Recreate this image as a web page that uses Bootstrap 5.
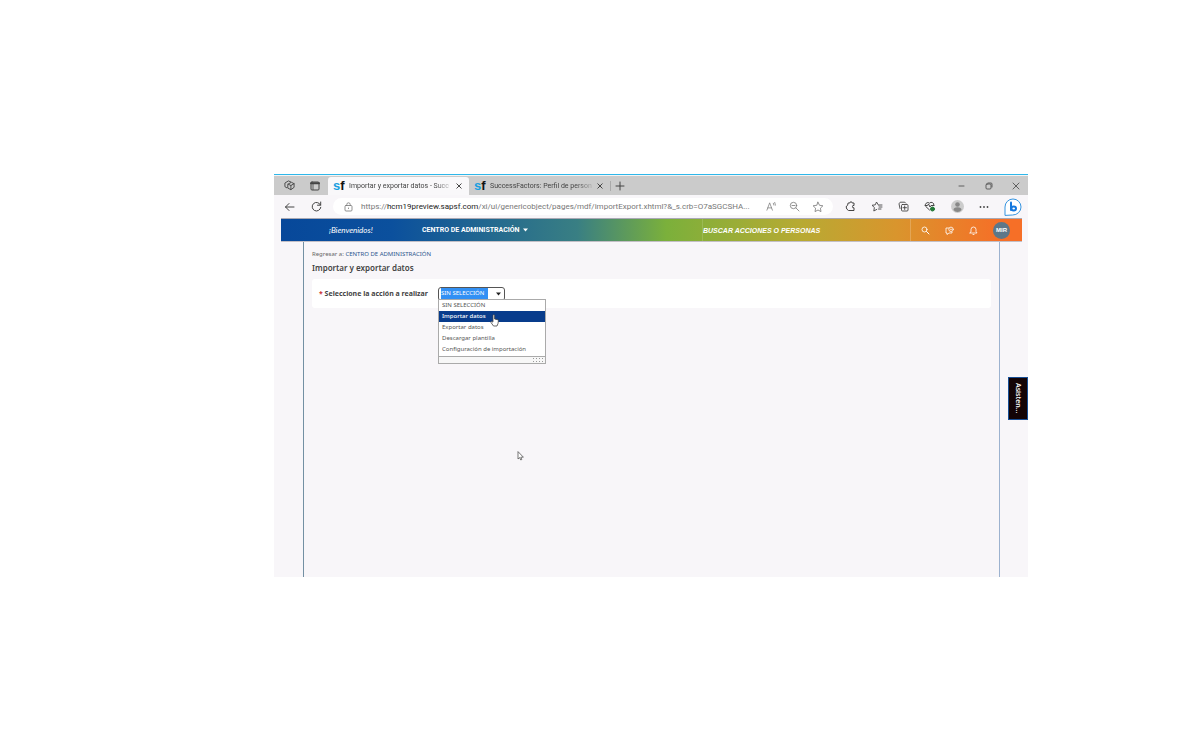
<!DOCTYPE html>
<html lang="es">
<head>
<meta charset="utf-8">
<meta name="viewport" content="width=device-width, initial-scale=1">
<title>Importar y exportar datos - SuccessFactors</title>
<link href="https://cdn.jsdelivr.net/npm/bootstrap@5.3.0/dist/css/bootstrap.min.css" rel="stylesheet">
<style>
  body { background: #fff; color: #444; font-family: "Noto Sans", sans-serif; font-size: 8px; line-height: 12px; }
  a { text-decoration: none; }
  button { padding: 0; border: 0; background: none; color: inherit; line-height: 1; display: flex; align-items: center; justify-content: center; }
  svg { display: block; fill: none; stroke: currentColor; stroke-width: 1; stroke-linecap: round; stroke-linejoin: round; }
  .stage { padding: 174px 172px 40px 274px; }
  .browser { background: #f8f6f9; border-top: 1px solid #2fb7ea; font-family: "Open Sans", sans-serif; }
  .tabstrip { height: 19px; border-top: 1px solid #f4f4f4; box-sizing: content-box; background: #cbcbcb; color: #444; }
  .tab-tools { width: 54px; padding-left: 10px; gap: 15px; }
  .browser-tab { width: 141px; height: 18px; padding: 0 5px; gap: 5px; color: #444; font-family: Roboto, "Open Sans", sans-serif; font-size: 7px; }
  .browser-tab.active { background: #f9f8fa; border-radius: 3px 3px 0 0; }
  .tab-title { width: 102px; white-space: nowrap; -webkit-mask-image: linear-gradient(90deg, #000 84%, #0003); mask-image: linear-gradient(90deg, #000 84%, #0003); }
  .favicon { width: 11px; font: bold 13px/14px "Liberation Sans", sans-serif; color: #111; }
  .favicon b { color: #189ee0; }
  .window-tools { gap: 19px; padding-right: 8px; }
  .addressbar { height: 23px; padding: 0 6px 0 10px; color: #444; }
  .url-pill { height: 17px; margin-left: 11px; padding: 0 9px 0 11px; gap: 8px; background: #fff; border-radius: 9px; color: #777; }
  .url-text { color: #777; white-space: nowrap; font-family: Roboto, "Open Sans", sans-serif; line-height: 14px; }
  .url-text b { color: #222; font-weight: 400; }
  .browser-tools { gap: 15px; padding-left: 12px; }
  .tool-rule { width: 1px; height: 10px; background: #aaa; }
  .avatar { width: 13px; height: 13px; border-radius: 50%; background: #ccc; }
  .app-header { height: 24px; margin: 0 6px 0 7px; color: #fff; border-top: 1px solid #a9a9b4; border-bottom: 1px solid #c3bfc6; background: linear-gradient(90deg, #07489a 0%, #0b509d 15%, #397f83 40%, #7bb03b 52%, #b7aa33 70%, #d9952d 83%, #f66f27 97%); font-family: "Liberation Sans", sans-serif; }
  .welcome { width: 93px; font: italic 8px/20px Lato, cursive; }
  .left-head { width: 421px; padding-left: 48px; }
  .module { font: bold 7px/12px Roboto, sans-serif; gap: 3px; white-space: nowrap; }
  .people-search { border: 0; border-left: 1px solid #ffffff22; border-right: 1px solid #ffffff33; background: none; color: #fff; padding: 0; min-width: 0; height: 22px; outline: 0; font: italic bold 7px/12px "Liberation Sans", sans-serif; }
  .people-search::placeholder { color: #fff; opacity: 1; }
  .header-tools { width: 111px; padding-left: 10px; gap: 15px; }
  .user-chip { width: 17px; height: 17px; border-radius: 50%; background: #5d7788; color: #fff; font: bold 6px/17px "Liberation Sans", sans-serif; }
  .app-body { position: relative; min-height: 335px; padding: 0 28px 0 29px; }
  .sheet { min-height: 335px; border-left: 1px solid #7390a3; border-right: 1px solid #9cb2cf; padding: 6px 8px 0 8px; font-family: "Noto Sans", sans-serif; }
  .crumb { font-size: 6px; line-height: 13px; color: #666; }
  .crumb a { color: #2d568e; }
  .sheet h1 { font-size: 8px; line-height: 14px; font-weight: 600; color: #444; margin: 0 0 4px; }
  .action-row { height: 29px; padding-left: 7px; gap: 7px; background: #fff; border-radius: 3px; font-size: 7px; font-weight: 700; }
  .action-row label { min-width: 112px; white-space: nowrap; }
  .action-row label i { color: #c33; font-style: normal; }
  .combo { position: relative; width: 67px; height: 14px; padding: 0 3px 0 2px; border: 1px solid #555; border-radius: 3px; background: #fff; }
  .combo input { width: 47px; height: 11px; padding: 0; border: 0; outline: 0; background: #3290f4; color: #fff; font-size: 6px; line-height: 11px; }
  .combo-list { position: absolute; z-index: 2; top: 11px; left: -1px; width: 108px; border: 1px solid #aaa; background: #fff; font-weight: 400; color: #555; }
  .combo-list button { width: 100%; height: 11px; padding-left: 3px; font-size: 6px; justify-content: flex-start; }
  .combo-list .chosen { background: #083c8c; color: #fff; font-weight: 500; }
  .combo-foot { height: 7px; margin-top: 1px; border-top: 1px solid #aaa; background: #f7f7f7; color: #999; }
  .hand { position: absolute; left: 51px; top: 14px; z-index: 3; }
  .arrow { position: absolute; left: 243px; top: 209px; }
  .assistant { position: absolute; right: 0; top: 135px; width: 20px; height: 43px; border: 1px solid #174e95; background: #130406; color: #fff; writing-mode: vertical-rl; font-size: 7px; font-weight: 600; }
</style>
</head>
<body>
<div class="stage">
  <div class="browser">
    <div class="tabstrip d-flex align-items-center">
      <div class="tab-tools d-flex align-items-center">
        <button aria-label="Espacios de trabajo"><svg width="11" height="11" viewBox="0 0 12 12"><path d="M4.500 4.500l3.500-2 3 1.500v4l-3.500 2.500-3-1.500zM4.500 4.500l3 1.500L11 4M7.500 6v4.500M3 8.500L1 7.300V3.300L4.800 1l2.400 1"/></svg></button>
        <button aria-label="Menú de pestañas"><svg width="10" height="10" viewBox="0 0 10 10"><rect x="1" y="1" width="8" height="8" rx="1"/><path d="M1 2.200h8" stroke-width="2"/><path d="M3 3v5.500" stroke-width=".8"/></svg></button>
      </div>
      <div class="browser-tab active d-flex align-items-center align-self-end">
        <span class="favicon"><b>s</b>f</span>
        <span class="tab-title">Importar y exportar datos - Succ</span>
        <button aria-label="Cerrar pestaña"><svg width="6" height="6" viewBox="0 0 6 6"><path d="M.8.8l4.400 4.400M5.200.8L.8 5.200"/></svg></button>
      </div>
      <div class="browser-tab d-flex align-items-center align-self-end">
        <span class="favicon"><b>s</b>f</span>
        <span class="tab-title">SuccessFactors: Perfil de persona</span>
        <button aria-label="Cerrar pestaña"><svg width="6" height="6" viewBox="0 0 6 6"><path d="M.8.8l4.400 4.400M5.200.8L.8 5.200"/></svg></button>
      </div>
      <span class="tool-rule"></span>
      <button class="ms-1" aria-label="Nueva pestaña"><svg width="10" height="10" viewBox="0 0 10 10"><path d="M5 1v8M1 5h8"/></svg></button>
      <div class="window-tools d-flex align-items-center ms-auto">
        <button aria-label="Minimizar"><svg width="8" height="8" viewBox="0 0 8 8"><path d="M1 4h5" stroke-width=".8"/></svg></button>
        <button aria-label="Restaurar"><svg width="8" height="8" viewBox="0 0 8 8"><rect x="1" y="2" width="5" height="5" rx="1" stroke-width=".8"/><path d="M3 1h3a1 1 0 0 1 1 1v3" stroke-width=".8"/></svg></button>
        <button aria-label="Cerrar"><svg width="8" height="8" viewBox="0 0 8 8"><path d="M1 1l6 6M7 1L1 7" stroke-width=".8"/></svg></button>
      </div>
    </div>

    <div class="addressbar d-flex align-items-center">
      <button aria-label="Atrás"><svg width="11" height="10" viewBox="0 0 11 10"><path d="M10 5H1.500M5 1.500L1.500 5 5 8.500"/></svg></button>
      <button class="ms-3" aria-label="Actualizar"><svg width="11" height="11" viewBox="0 0 11 11"><path d="M9.500 4A4.300 4.300 0 1 0 9.800 6.300M9.700 1v3.200H6.500"/></svg></button>
      <div class="url-pill d-flex align-items-center flex-grow-1">
        <svg width="9" height="10" viewBox="0 0 9 10"><g stroke-width=".8"><rect x="1" y="3.500" width="7" height="5.500" rx="1"/><path d="M2.800 3.500V2.500a1.700 1.700 0 0 1 3.400 0v1M4.500 6v.6"/></g></svg>
        <a class="url-text flex-grow-1" href="#">https://<b>hcm19preview.sapsf.com</b>/xi/ui/genericobject/pages/mdf/importExport.xhtml?&amp;_s.crb=O7aSGCSHA...</a>
        <button aria-label="Leer en voz alta"><svg width="11" height="11" viewBox="0 0 12 11"><path d="M1 9.500l3-8 3 8M2 7h4M8 2l.6 2M9.500 1l.8 3" stroke-width=".8"/></svg></button>
        <button class="ms-1" aria-label="Zoom"><svg width="11" height="11" viewBox="0 0 11 11"><g stroke-width=".8"><circle cx="4.500" cy="4.500" r="3.200"/><path d="M7 7l3 3M3 4.500h3"/></g></svg></button>
        <button class="ms-1" aria-label="Favorito"><svg width="12" height="12" viewBox="0 0 12 12"><path d="M6 1.200l1.500 3.100 3.400.5-2.500 2.400.6 3.400L6 9l-3 1.600.6-3.400L1.100 4.800l3.400-.5z" stroke-width=".8"/></svg></button>
      </div>
      <div class="browser-tools d-flex align-items-center">
        <button aria-label="Extensiones"><svg width="11" height="11" viewBox="0 0 11 11"><path d="M3.500 2h1.300a1.200 1.200 0 0 1 2.400 0H9v2.500a1.200 1.200 0 1 0 0 2.300V9.500H3.500A4 4 0 0 1 1.200 6a1.500 1.500 0 0 1 1-1.500z"/></svg></button>
        <button aria-label="Favoritos"><svg width="12" height="11" viewBox="0 0 12 11"><path d="M7.500 4.200L5.500 1 4.300 3.800 1 4.300l2.400 2.200L2.800 10l3-1.600M8 4h3M8 6h3M7.500 8H10" stroke-width=".9"/></svg></button>
        <button aria-label="Colecciones"><svg width="11" height="11" viewBox="0 0 11 11"><g stroke-width=".9"><rect x="3.500" y="3.500" width="6.500" height="6.500" rx="1"/><path d="M2 7.500L1 2.800 2.200 1.200h4.600l1 1M6.700 5v3.500M5 6.700h3.500"/></g></svg></button>
        <button aria-label="Rendimiento"><svg width="12" height="11" viewBox="0 0 12 11"><path d="M5.500 9L1.800 5.500a2.500 2.500 0 0 1 3.700-3.300 2.500 2.500 0 0 1 4.300 2.300M1 4.500h2.500l1-1.500L6 6l1-1.500h3"/><circle cx="8.500" cy="8" r="2" fill="#267a3a" stroke="#267a3a"/></svg></button>
        <button class="avatar" aria-label="Perfil"><svg width="13" height="13" viewBox="0 0 13 13"><g fill="#888" stroke="none"><circle cx="6.500" cy="4.500" r="2.300"/><path d="M2.500 10a4 2.800 0 0 1 8 0 5 5 0 0 1-8 0z"/></g></svg></button>
        <button aria-label="Más opciones"><svg width="10" height="4" viewBox="0 0 10 4"><g fill="#444" stroke="none"><circle cx="1.500" cy="2" r=".9"/><circle cx="5" cy="2" r=".9"/><circle cx="8.500" cy="2" r=".9"/></g></svg></button>
        <button aria-label="Bing"><svg width="18" height="18" viewBox="0 0 18 18"><path d="M1 17V9a8 8 0 1 1 8 8z" fill="#fff" stroke="#3594e0"/><path d="M7 4.500V12" stroke="#1478df" stroke-width="2"/><ellipse cx="9.700" cy="10.500" rx="2.300" ry="2" stroke="#1478df" stroke-width="2"/></svg></button>
      </div>
    </div>

    <header class="app-header d-flex align-items-center">
      <div class="left-head d-flex align-items-center flex-shrink-0">
        <span class="welcome">¡Bienvenidos!</span>
        <button class="module">CENTRO DE ADMINISTRACIÓN <svg width="5" height="4" viewBox="0 0 5 4"><path d="M0 .5h5L2.500 3.500z" fill="#fff" stroke="none"/></svg></button>
      </div>
      <input class="people-search flex-grow-1" type="search" placeholder="BUSCAR ACCIONES O PERSONAS" aria-label="Buscar acciones o personas">
      <div class="header-tools d-flex align-items-center flex-shrink-0">
        <button aria-label="Buscar"><svg width="9" height="9" viewBox="0 0 9 9"><circle cx="3.500" cy="3.500" r="2.500" stroke-width=".8"/><path d="M5.500 5.500L8 8"/></svg></button>
        <button aria-label="Comentarios"><svg width="9" height="9" viewBox="0 0 9 9"><g stroke-width=".8"><path d="M3.500 2H1v5h1v1.500L4 7h3V6"/><circle cx="6" cy="3.300" r="2.200"/><path d="M5.500 3.300h1"/></g></svg></button>
        <button aria-label="Notificaciones"><svg width="9" height="9" viewBox="0 0 9 9"><path d="M1 7h7L7 5.500v-2a2.500 2.500 0 0 0-5 0v2zM4 8.500h1" stroke-width=".8"/></svg></button>
        <button class="user-chip" aria-label="Cuenta">MIR</button>
      </div>
    </header>

    <main class="app-body">
      <div class="sheet">
        <div class="crumb">Regresar a: <a href="#">CENTRO DE ADMINISTRACIÓN</a></div>
        <h1>Importar y exportar datos</h1>
        <form class="action-row d-flex align-items-center">
          <label for="accion"><i>*</i> Seleccione la acción a realizar</label>
          <div class="combo d-flex align-items-center justify-content-between">
            <input id="accion" type="text" value="SIN SELECCIÓN">
            <button type="button" aria-label="Abrir lista"><svg width="5" height="4" viewBox="0 0 5 4"><path d="M0 .5h5L2.500 3.500z" fill="#222" stroke="none"/></svg></button>
            <div class="combo-list">
              <button type="button">SIN SELECCIÓN</button>
              <button type="button" class="chosen">Importar datos</button>
              <button type="button">Exportar datos</button>
              <button type="button">Descargar plantilla</button>
              <button type="button">Configuración de importación</button>
              <div class="combo-foot d-flex justify-content-end"><svg width="13" height="6" viewBox="0 0 13 6"><path d="M1 1.500h11M1 4.500h11" stroke-dasharray="1 2" stroke-linecap="butt"/></svg></div>
              <svg class="hand" width="9" height="13" viewBox="0 0 9 13"><path d="M3 7.500V1.500a.8.800 0 0 1 1.600 0V5l3 .7c.6.200.9.600.8 1.200L8 9.500 7 12H3.500L1 8.500c-.5-.9.600-1.500 1.200-.8z" fill="#fff" stroke="#444" stroke-width=".8"/></svg>
            </div>
          </div>
        </form>
      </div>
      <svg class="arrow" width="7" height="10" viewBox="0 0 7 10"><path d="M1 1v7l1.600-1.400L3.800 9l1-.5-1-2.300H6z" fill="#fff" stroke="#555" stroke-width=".8"/></svg>
      <button class="assistant">Asisten...</button>
    </main>
  </div>
</div>
<script src="https://cdn.jsdelivr.net/npm/bootstrap@5.3.0/dist/js/bootstrap.bundle.min.js"></script>
</body>
</html>
